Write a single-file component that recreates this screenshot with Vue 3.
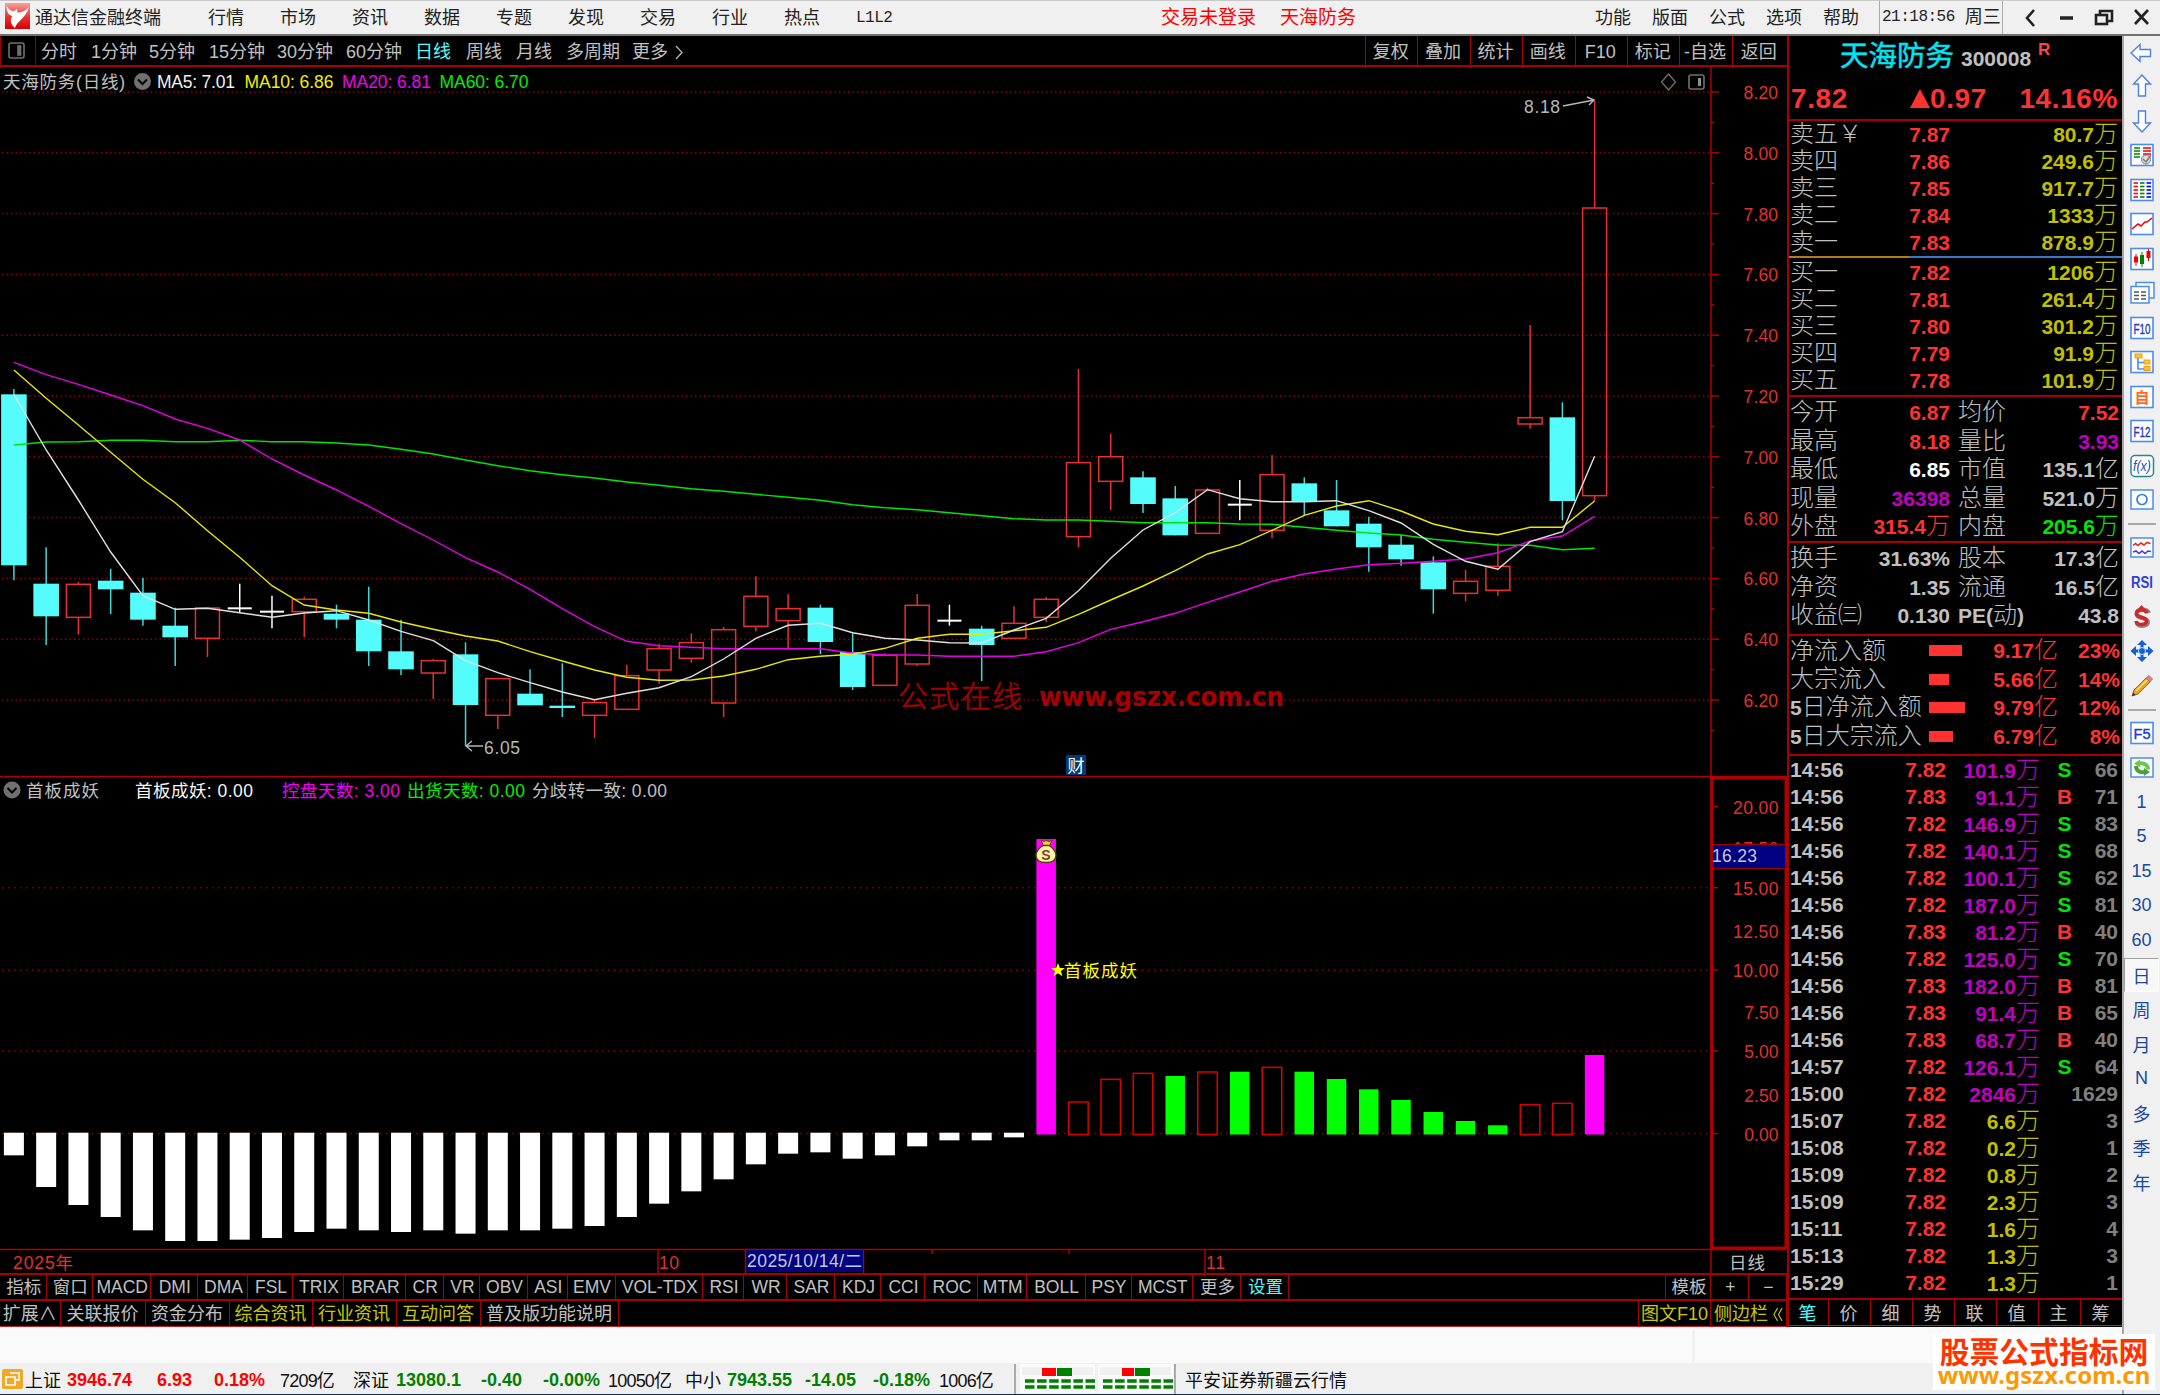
<script setup>
const menus = ['行情', '市场', '资讯', '数据', '专题', '发现', '交易', '行业', '热点', 'L1L2'];
const rightMenus = ['功能', '版面', '公式', '选项', '帮助'];
const periods = ['分时', '1分钟', '5分钟', '15分钟', '30分钟', '60分钟', '日线', '周线', '月线', '多周期', '更多'];
const actions = ['复权', '叠加', '统计', '画线', 'F10', '标记', '-自选', '返回'];
const indicators = [
  '指标', '窗口', 'MACD', 'DMI', 'DMA', 'FSL', 'TRIX', 'BRAR', 'CR', 'VR', 'OBV', 'ASI', 'EMV', 'VOL-TDX',
  'RSI', 'WR', 'SAR', 'KDJ', 'CCI', 'ROC', 'MTM', 'BOLL', 'PSY', 'MCST', '更多', '设置',
];
const links = [
  { text: '扩展∧' },
  { text: '关联报价' },
  { text: '资金分布' },
  { text: '综合资讯', hot: true },
  { text: '行业资讯', hot: true },
  { text: '互动问答', hot: true },
  { text: '普及版功能说明' },
];

// x position of the bar with index i
const cx = (i) => 13.9 + i * 32.26;
const py = (v) => 340 + v / 3;

// [type, high, top, bottom, low]   c = down, r = up, w = flat
const candles = [
  ['c', 147, 163, 676, 721], ['c', 622, 731, 829, 915], ['r', 726, 733, 832, 884], ['c', 686, 722, 748, 822],
  ['c', 713, 758, 839, 857], ['c', 803, 857, 892, 978], ['r', 804, 804, 895, 951], ['w', 731, 805, 805, 818],
  ['w', 767, 815, 815, 865], ['r', 770, 778, 815, 892], ['c', 794, 821, 839, 865], ['c', 740, 839, 934, 978],
  ['c', 839, 934, 988, 1005], ['r', 957, 962, 999, 1077], ['c', 907, 943, 1095, 1217], ['r', 1016, 1016, 1126, 1167],
  ['c', 988, 1061, 1096, 1096], ['c', 970, 1097, 1104, 1131], ['r', 1080, 1088, 1126, 1194], ['r', 974, 1007, 1108, 1108],
  ['r', 911, 926, 990, 1031], ['r', 880, 908, 955, 968], ['r', 861, 869, 1089, 1131], ['r', 709, 769, 859, 874],
  ['r', 762, 806, 842, 925], ['c', 794, 803, 906, 942], ['c', 878, 936, 1041, 1050], ['r', 940, 946, 1036, 1036],
  ['r', 762, 796, 972, 978], ['w', 794, 842, 842, 857], ['c', 857, 866, 915, 1023], ['r', 799, 850, 895, 895],
  ['r', 771, 778, 832, 847], ['r', 87, 368, 590, 622], ['r', 281, 350, 424, 510], ['c', 394, 412, 492, 519],
  ['c', 438, 475, 586, 586], ['r', 443, 450, 580, 580], ['w', 420, 494, 494, 541], ['r', 345, 404, 571, 595],
  ['c', 412, 430, 485, 526], ['c', 420, 511, 559, 559], ['c', 530, 551, 622, 695], ['c', 585, 614, 658, 677],
  ['c', 649, 667, 748, 821], ['r', 690, 724, 760, 784], ['r', 610, 679, 751, 767], ['r', -45, 233, 252, 266],
  ['c', 187, 232, 483, 541], ['r', -718, -396, 467, 483],
].map(([type, high, top, bottom, low], i) => ({
  type, x: cx(i), high: py(high), top: py(top), bottom: py(bottom), low: py(low),
}));

const averages = [
  { color: '#00e600', data: [315, 306, 305, 301, 301, 305, 305, 301, 305, 305, 309, 315, 328, 342, 360, 377, 392, 404, 414, 426, 436, 446, 454, 463, 472, 481, 494, 503, 509, 518, 527, 536, 540, 540, 544, 548, 548, 548, 552, 553, 562, 571, 579, 585, 598, 607, 615, 616, 629, 625] },
  { color: '#e600e6', data: [67, 104, 133, 165, 197, 237, 265, 300, 357, 405, 450, 499, 551, 600, 653, 696, 748, 806, 860, 904, 917, 922, 926, 926, 926, 926, 939, 945, 945, 949, 949, 949, 935, 908, 868, 845, 820, 787, 756, 724, 702, 687, 674, 670, 664, 657, 638, 603, 588, 529] },
  { color: '#e8e800', data: [90, 175, 255, 337, 418, 488, 572, 652, 737, 795, 810, 820, 846, 868, 888, 903, 935, 963, 990, 1012, 1021, 1020, 1008, 988, 959, 949, 943, 925, 895, 883, 883, 872, 862, 823, 780, 738, 692, 642, 614, 571, 526, 498, 482, 513, 552, 574, 584, 562, 562, 483] },
  { color: '#e0e0e0', data: [163, 330, 480, 636, 767, 808, 805, 818, 832, 819, 812, 840, 874, 902, 962, 998, 1028, 1056, 1079, 1060, 1043, 1010, 957, 895, 856, 850, 878, 895, 900, 908, 909, 870, 835, 752, 655, 570, 518, 449, 476, 485, 485, 482, 512, 549, 613, 664, 688, 605, 575, 349] },
].map((m) => ({ color: m.color, points: m.data.map((v, i) => `${cx(i).toFixed(1)},${py(v).toFixed(1)}`).join(' ') }));

const negative = [166, 261, 315, 351, 391, 423, 423, 419, 414, 396, 386, 391, 396, 391, 401, 391, 391, 386, 378, 351, 311, 274, 238, 193, 161, 157, 176, 166, 139, 121, 121, 112];
const positive = [
  ['m', 177], ['r', 966], ['r', 898], ['r', 880], ['g', 888], ['r', 876], ['g', 875], ['r', 862], ['g', 875],
  ['g', 897], ['g', 928], ['g', 960], ['g', 996], ['g', 1023], ['g', 1036], ['r', 974], ['r', 970], ['m', 825],
];
const bars = [
  ...negative.map((v, i) => ({ type: 'n', x: cx(i) - 10, y: 1132.7, h: 1100 + v / 3 - 1132.7 })),
  ...positive.map(([type, v], i) => ({ type, x: cx(i + 32) - 9.8, y: 780 + v / 3, h: 354.5 - v / 3 })),
];

const prices = Array.from({ length: 11 }, (_, i) => ({ text: (8.2 - i * 0.2).toFixed(2), y: 92 + i * 60.8 }));
const levels = [
  { text: '20.00', y: 806.5 },
  { text: '17.50', y: 847.5 },
  { text: '15.00', y: 887.7, grid: true },
  { text: '12.50', y: 931 },
  { text: '10.00', y: 970, grid: true },
  { text: '7.50', y: 1012 },
  { text: '5.00', y: 1051, grid: true },
  { text: '2.50', y: 1094.5 },
  { text: '0.00', y: 1133.5, grid: true },
];

const asks = [['卖五', '7.87', '80.7万'], ['卖四', '7.86', '249.6万'], ['卖三', '7.85', '917.7万'], ['卖二', '7.84', '1333万'], ['卖一', '7.83', '878.9万']];
const bids = [['买一', '7.82', '1206万'], ['买二', '7.81', '261.4万'], ['买三', '7.80', '301.2万'], ['买四', '7.79', '91.9万'], ['买五', '7.78', '101.9万']];
const details = [
  ['今开', '6.87', 'red', '均价', '7.52', 'red'],
  ['最高', '8.18', 'red', '量比', '3.93', 'purple'],
  ['最低', '6.85', 'white', '市值', '135.1亿', 'gray'],
  ['现量', '36398', 'purple', '总量', '521.0万', 'gray'],
  ['外盘', '315.4万', 'red', '内盘', '205.6万', 'green'],
];
const basics = [
  ['换手', '31.63%', 'gray', '股本', '17.3亿', 'gray'],
  ['净资', '1.35', 'gray', '流通', '16.5亿', 'gray'],
  ['收益㈢', '0.130', 'gray', 'PE(动)', '43.8', 'gray'],
];
const flows = [['净流入额', 33, '9.17亿', '23%'], ['大宗流入', 20, '5.66亿', '14%'], ['5日净流入额', 36, '9.79亿', '12%'], ['5日大宗流入', 24, '6.79亿', '8%']];
const ticks = [
  ['14:56', '7.82', '101.9万', 'S', 66], ['14:56', '7.83', '91.1万', 'B', 71], ['14:56', '7.82', '146.9万', 'S', 83],
  ['14:56', '7.82', '140.1万', 'S', 68], ['14:56', '7.82', '100.1万', 'S', 62], ['14:56', '7.82', '187.0万', 'S', 81],
  ['14:56', '7.83', '81.2万', 'B', 40], ['14:56', '7.82', '125.0万', 'S', 70], ['14:56', '7.83', '182.0万', 'B', 81],
  ['14:56', '7.83', '91.4万', 'B', 65], ['14:56', '7.83', '68.7万', 'B', 40], ['14:57', '7.82', '126.1万', 'S', 64],
  ['15:00', '7.82', '2846万', '', 1629], ['15:07', '7.82', '6.6万', '', 3], ['15:08', '7.82', '0.2万', '', 1],
  ['15:09', '7.82', '0.8万', '', 2], ['15:09', '7.82', '2.3万', '', 3], ['15:11', '7.82', '1.6万', '', 4],
  ['15:13', '7.82', '1.3万', '', 3], ['15:29', '7.82', '1.3万', '', 1],
];
const quoteTabs = ['笔', '价', '细', '势', '联', '值', '主', '筹'];

// splits "80.7万" into runs, so the digits can be bold and the unit light
const parts = (s) => String(s).match(/[\x20-\x7e]+|[^\x20-\x7e]+/g).map((t) => ({ t, num: /^[\x20-\x7e]/.test(t) }));

const frame = '<rect x="1" y="1.5" width="22" height="21" fill="#fff" stroke="#4a8cf0" stroke-width="1.6"/>';
const label = (t) =>
  `${frame}<text x="12" y="17.5" text-anchor="middle" font-family="Liberation Sans" font-size="15" fill="#2038d0" stroke="#2038d0" stroke-width=".4" textLength="17" lengthAdjust="spacingAndGlyphs">${t}</text>`;
const hlines = (x, w, c) => [5, 8.5, 12, 15.5, 19].map((y) => `<path d="M${x} ${y}h${w}" stroke="${c}" stroke-width="1.6"/>`).join('');
const arrow = 'fill="#fff" stroke="#4a80e8" stroke-width="1.4"';
const tools = [
  { icon: `<path d="M1 12L10 3.5V8.500H20.500V15.500H10V20.500Z" ${arrow}/>` },
  { icon: `<path d="M12 1L20.500 10H15.500V22H8.500V10H3.500Z" ${arrow}/>` },
  { icon: `<path d="M12 23L3.500 14H8.500V2H15.500V14H20.500Z" ${arrow}/>` },
  { icon: `${frame}${[5, 8, 11, 14].map((y) => `<path d="M4 ${y}h6" stroke="#008000" stroke-width="1.5"/>`).join('')}<path d="M13 5h8M13 8h8M13 11h8" stroke="#f00000" stroke-width="1.5"/><circle cx="16" cy="16.500" r="4.500" fill="#ddd" stroke="#777"/><path d="M13 16l3 3 5-7" fill="none" stroke="#777" stroke-width="1.4"/>` },
  { icon: `${frame}${hlines(3.5, 4.5, '#f00')}${hlines(10, 4.5, '#008000')}${hlines(16.5, 4.5, '#00f')}` },
  { icon: `${frame}<path d="M2 17L8 12L11 14L15 10L17 10L22 6" fill="none" stroke="#f00000" stroke-width="1.6"/>` },
  { icon: `${frame}<path d="M6 7v12M18.500 2v12" stroke="#f00000"/><path d="M12 5v15" stroke="#008000"/><rect x="4" y="9.500" width="4" height="6" fill="#f00000"/><rect x="10" y="8" width="4" height="9" fill="#008000"/><rect x="16.500" y="4" width="4" height="7" fill="#f00000"/>` },
  { icon: `<path d="M6 5V1.500H24V17H19" fill="#fff" stroke="#4a8cf0" stroke-width="1.500"/><rect x="1" y="5.500" width="18" height="16.500" fill="#fff" stroke="#4a8cf0" stroke-width="1.500"/><path d="M4 11h5M11 11h5M4 14.500h5M11 14.500h5M4 18h5M11 18h5" stroke="#555" stroke-width="1.300"/>` },
  { icon: label('F10') },
  { icon: `${frame}<path d="M8 7V19H14M8 12.500H14" fill="none" stroke="#4a8cf0" stroke-width="1.600"/><rect x="5" y="4" width="7" height="4" fill="#ffc040" stroke="#f0a000"/><rect x="14" y="10" width="6" height="4" fill="#ffc040" stroke="#f0a000"/><rect x="14" y="16.500" width="6" height="4" fill="#ffc040" stroke="#f0a000"/>` },
  { icon: `${frame}<text x="12" y="17.500" text-anchor="middle" font-family="Noto Sans CJK SC" font-weight="700" font-size="15" fill="#ff6a20">自</text>` },
  { icon: label('F12') },
  { icon: `<rect x="1" y="1.500" width="22.500" height="21" rx="4" fill="#fff" stroke="#208890" stroke-width="1.500"/><text x="12" y="17" text-anchor="middle" font-family="Liberation Sans" font-style="italic" font-size="15" fill="#2050d0" textLength="18" lengthAdjust="spacingAndGlyphs">f(x)</text>` },
  { icon: `<rect x="1" y="2" width="22" height="19" fill="#fff" stroke="#4a8cf0" stroke-width="1.500"/><circle cx="12" cy="11.500" r="5" fill="none" stroke="#3080e0" stroke-width="1.700"/>` },
  { line: true },
  { icon: `<rect x="1" y="2" width="22" height="19" fill="#fff" stroke="#4a8cf0" stroke-width="1.500"/><path d="M3 9.500l2.500-2 2.500 2 3-2.500 3 2 3-2.500 3.500 1" fill="none" stroke="#f02020" stroke-width="1.600"/><path d="M3 16l3-1 3 2.500 3-2.500 3 2.500 3-2.500 3 .5" fill="none" stroke="#5030e0" stroke-width="1.600"/>` },
  { icon: '<text x="12" y="17.500" text-anchor="middle" font-family="Liberation Sans" font-weight="700" font-size="16" fill="#3040d8" textLength="22" lengthAdjust="spacingAndGlyphs">RSI</text>' },
  { icon: '<path d="M19 8C18 5 15 4.500 12.500 4.500C8.500 4.500 6.500 6.500 6.500 9C6.500 15 18 11.500 18 17C18 19.500 15.500 21 12.500 21C9 21 7 19.500 6.500 17" fill="none" stroke="#888" stroke-width="4"/><path d="M17 8C16 5.500 13.500 5 11.500 5C8 5 6.500 6.500 6.500 8.500C6.500 13.500 16.500 11 16.500 16C16.500 18.500 14 19.500 11.500 19.500C8.500 19.500 6.500 18.500 6 16" fill="none" stroke="#d02828" stroke-width="3.600"/><path d="M11.500 0l4.500 5H7z" fill="#d02828"/>' },
  { icon: '<path d="M12 1l5 5h-3.500v4.500H18V7l5.500 5L18 17v-3.500h-4.500V18H17l-5 5-5-5h3.500v-4.500H6V17L.5 12 6 7v3.500h4.500V6H7z" fill="#1060d0"/><circle cx="12" cy="12" r="3.500" fill="#1060d0" stroke="#c0dcff"/>' },
  { icon: '<path d="M2 22l2-6L16 4l4 4L8 20z" fill="#f0a020" stroke="#805010" stroke-width=".8"/><path d="M16 4l3-2.500 3.500 3.500L20 8z" fill="#e88080" stroke="#907070" stroke-width=".8"/><path d="M2 22l1.200-3.500L5.500 21z" fill="#333"/><path d="M6 17L17 6" stroke="#ffe080" stroke-width="1.500"/>' },
  { line: true },
  { icon: label('F5') },
  { icon: `<rect x="1" y="2" width="22" height="19" fill="#fff" stroke="#4a8cf0" stroke-width="1.500"/><path d="M18 13.500C18 9 14 6.500 9 7.500" fill="none" stroke="#6cc850" stroke-width="4"/><path d="M10 3.500V11.500L4 7.500z" fill="#6cc850"/><path d="M6 10C6 14.500 10 17 15 16" fill="none" stroke="#48a038" stroke-width="4"/><path d="M14 12V20L20 16z" fill="#48a038"/>` },
  ...['1', '5', '15', '30', '60', '日', '周', '月', 'N', '多', '季', '年'].map((text) => ({ text })),
];

const indexes = [
  ['上证', '3946.74', '6.93', '0.18%', '7209亿', 'up'],
  ['深证', '13080.1', '-0.40', '-0.00%', '10050亿', 'down'],
  ['中小', '7943.55', '-14.05', '-0.18%', '1006亿', 'down'],
];
</script>

<template>
  <div class="app">
    <header class="titlebar">
      <svg class="logo" width="25" height="26" viewBox="0 0 25 26">
        <defs>
          <linearGradient id="logoFill" x1="0" y1="0" x2="0" y2="1">
            <stop offset="0" stop-color="#f8a0a0" />
            <stop offset=".55" stop-color="#e83030" />
            <stop offset="1" stop-color="#d80000" />
          </linearGradient>
        </defs>
        <rect width="25" height="26" fill="url(#logoFill)" />
        <path d="M1.500 2C1.500 8 3 12 7.500 13C5 16 5 21 10 25C12 18 21 15 24 4C20 8 16 10 12 9.500C13 6 11 5 10 8C7 8.500 3 7 1.500 2Z" fill="#fff" />
      </svg>
      <span class="brand">通达信金融终端</span>
      <nav class="menu">
        <span v-for="m in menus" :key="m" :class="{ mono: m === 'L1L2' }">{{ m }}</span>
      </nav>
      <div class="login"><span>交易未登录</span><span>天海防务</span></div>
      <nav class="menu-right">
        <span v-for="m in rightMenus" :key="m">{{ m }}</span>
      </nav>
      <div class="clock"><span class="mono">21:18:56</span><span>周三</span></div>
      <svg class="winbtns" width="157" height="34" viewBox="2003 0 157 34" fill="none" stroke="#222" stroke-width="2.6">
        <path d="M2034 9L2027 17L2034 25" />
        <path d="M2060 17H2073" stroke-width="3.500" />
        <path d="M2100 13V10H2112V20H2108" />
        <rect x="2096" y="14" width="11" height="9" />
        <path d="M2135 9L2148 23M2148 9L2135 23" />
      </svg>
    </header>

    <div class="body">
      <div class="workspace">
        <div class="terminal">
          <section class="chart-area">
            <div class="toolbar">
              <div class="panel-toggle">
                <svg width="18" height="18" viewBox="0 0 18 18" fill="none" stroke="#707070" stroke-width="1.6">
                  <rect x="1" y="1" width="15" height="15" rx="2" />
                  <rect x="10" y="4" width="2.500" height="9" fill="#707070" />
                </svg>
              </div>
              <nav class="periods">
                <span v-for="p in periods" :key="p" :class="{ active: p === '日线' }">{{ p }}</span>
                <svg width="8" height="15" viewBox="0 0 8 15" fill="none" stroke="#b8b8b8" stroke-width="1.3">
                  <path d="M1 1L7 7.500L1 14" />
                </svg>
              </nav>
              <nav class="actions">
                <span v-for="a in actions" :key="a">{{ a }}</span>
              </nav>
            </div>

            <svg class="chart" width="1787" height="1206" viewBox="0 67 1787 1206">
              <g class="grid">
                <line v-for="p in prices" :key="p.text" x1="2" x2="1710" :y1="p.y" :y2="p.y" class="dots" />
                <line v-for="l in levels.filter((v) => v.grid)" :key="l.text" x1="2" x2="1710" :y1="l.y" :y2="l.y" class="dots wide" />
              </g>

              <g v-for="(c, i) in candles" :key="i" :class="['candle', c.type]">
                <line :x1="c.x" :x2="c.x" :y1="c.high" :y2="c.type === 'r' ? c.top : c.low" />
                <line v-if="c.type === 'r'" :x1="c.x" :x2="c.x" :y1="c.bottom" :y2="c.low" />
                <line v-if="c.type === 'w'" :x1="c.x - 12" :x2="c.x + 12" :y1="c.top" :y2="c.top" class="flat" />
                <rect v-else :x="c.type === 'c' ? c.x - 12.800 : c.x - 12" :y="c.top" :width="c.type === 'c' ? 25.600 : 24" :height="c.bottom - c.top" />
              </g>
              <polyline v-for="m in averages" :key="m.color" :points="m.points" :stroke="m.color" fill="none" stroke-width="1.400" />

              <g class="frame">
                <path d="M1711 67V1273M0 776.500H1787M0 1249.500H1787M658 1249V1273M1205 1249V1273M932 1249V1254M1069 1249V1254M863.500 1249V1273M745.500 1249V1273" />
                <path d="M1712 778H1786V1248H1712Z" class="thick" />
                <path v-for="p in prices" :key="p.text" :d="`M1711 ${p.y}h8`" />
                <path v-for="p in prices" :key="p.y" :d="`M1711 ${p.y + 30.400}h3`" />
                <path v-for="l in levels" :key="l.text" :d="`M1711 ${l.y}h${l.text.endsWith('50') ? 3 : 7}`" />
              </g>

              <g class="axis">
                <text v-for="p in prices" :key="p.text" x="1743.500" :y="p.y + 7" textLength="34.500">{{ p.text }}</text>
                <text v-for="l in levels" :key="l.text" x="1778.500" :y="l.y + 7" text-anchor="end" :textLength="l.text.length * 11.300 - 11">{{ l.text }}</text>
                <rect x="1713" y="844.500" width="72.500" height="24" fill="#000080" stroke="#a00000" />
                <text x="1712" y="861.500" textLength="45" class="cursor">16.23</text>
              </g>

              <!-- main chart legend -->
              <g class="legend">
                <text x="3" y="88" textLength="122" fill="#c0c0c0">天海防务(日线)</text>
                <text x="157" y="87.500" textLength="78" fill="#f0f0f0">MA5: 7.01</text>
                <text x="244.500" y="87.500" textLength="89" fill="#f0f000">MA10: 6.86</text>
                <text x="342" y="87.500" textLength="89" fill="#f000f0">MA20: 6.81</text>
                <text x="439.500" y="87.500" textLength="89" fill="#00f000">MA60: 6.70</text>
                <circle cx="142.500" cy="81.500" r="8.500" fill="#707070" />
                <path d="M138 79.500l4.500 4.500l4.500-4.500" stroke="#000" stroke-width="2" fill="none" />
                <path d="M1668.500 74l7 8l-7 8l-7-8z" fill="none" stroke="#707070" stroke-width="1.300" />
                <rect x="1689" y="75" width="15" height="14" rx="2" fill="none" stroke="#707070" stroke-width="1.600" />
                <rect x="1698" y="78" width="3" height="8" fill="#909090" />
              </g>

              <g class="marks">
                <text x="1524" y="112.500" textLength="36">8.18</text>
                <path d="M1563 106L1594 100M1587 97L1594 100L1589 105" />
                <text x="484" y="753.500" textLength="36">6.05</text>
                <path d="M467 746H483M472 741L466 746L472 751" />
              </g>

              <text x="898" y="706.500" textLength="124" class="stamp-cn">公式在线</text>
              <text x="1039" y="706" textLength="245" lengthAdjust="spacingAndGlyphs" class="stamp-url">www.gszx.com.cn</text>
              <rect x="1066" y="755" width="20" height="20" fill="#003c74" />
              <text x="1067.500" y="771.500" class="news">财</text>

              <g class="legend">
                <circle cx="12" cy="790" r="8.500" fill="#707070" />
                <path d="M7.500 788l4.500 4.500l4.500-4.500" stroke="#000" stroke-width="2" fill="none" />
                <text x="26" y="796.500" textLength="73" fill="#c0c0c0">首板成妖</text>
                <text x="135" y="796.500" textLength="118" fill="#f8f8f8">首板成妖: 0.00</text>
                <text x="282" y="796.500" textLength="118" fill="#f000f0">控盘天数: 3.00</text>
                <text x="407" y="796.500" textLength="118" fill="#00f000">出货天数: 0.00</text>
                <text x="532" y="796.500" textLength="135" fill="#c0c0c0">分歧转一致: 0.00</text>
              </g>

              <rect v-for="(b, i) in bars" :key="i" :x="b.x" :y="b.y" :width="b.type === 'n' ? 20 : 19.500" :height="b.h" :class="['bar', b.type]" />

              <g class="bag">
                <path d="M1041 840l3 1.500 2-1 3 1 3-1.500-3 7h-5z" fill="#f0d030" stroke="#604000" />
                <path d="M1043 845.500h6C1053 848 1056 851.500 1056 855.500C1056 860 1052.500 862.500 1046 862.500C1039.500 862.500 1036 860 1036 855.500C1036 851.500 1039 848 1043 845.500Z" fill="#fcf4a0" stroke="#504010" stroke-width="1.400" />
                <text x="1046" y="859.500" text-anchor="middle">S</text>
              </g>
              <path d="M1058 963l1.900 5h5l-4 3.200 1.500 5-4.400-3-4.400 3 1.500-5-4-3.200h5z" fill="#ff0" />
              <text x="1064" y="977" textLength="73" class="signal">首板成妖</text>

              <g class="dates">
                <rect x="746.500" y="1250" width="116.500" height="22" fill="#000080" />
                <text x="13" y="1268.500" textLength="60">2025年</text>
                <text x="659" y="1268.500" textLength="20">10</text>
                <text x="1206" y="1268.500" textLength="19">11</text>
                <text x="747" y="1267" textLength="115" class="cursor">2025/10/14/二</text>
                <text x="1729" y="1268.500" textLength="36" class="unit">日线</text>
              </g>
            </svg>

            <div class="tabs indicators">
              <span v-for="t in indicators" :key="t" :class="{ active: t === '设置' }">{{ t }}</span>
              <div class="filler"></div>
              <span>模板</span>
              <span>+</span>
              <span>−</span>
            </div>
            <div class="tabs links">
              <span v-for="l in links" :key="l.text" :class="{ hot: l.hot }">{{ l.text }}</span>
              <div class="filler"></div>
              <span class="hot">图文F10</span>
              <span class="hot">侧边栏
                <svg width="10" height="15" viewBox="0 0 11 16" fill="none" stroke="#c8c800" stroke-width="1.200"><path d="M5 1L1 8L5 15M10 1L6 8L10 15" /></svg>
              </span>
            </div>
          </section>

          <section class="quote">
            <div class="quote-head">
              <div class="name"><span class="cn">天海防务</span><b>300008</b><sup>R</sup></div>
              <div class="last">
                <b>7.82</b>
                <b class="change"><svg width="20" height="19" viewBox="0 0 20 19"><path d="M10 0L20 19H0Z" fill="#ff3232" /></svg>0.97</b>
                <b>14.16%</b>
              </div>
            </div>

            <div class="block book asks">
              <div v-for="(r, i) in asks" :key="r[0]" class="book-row">
                <span>{{ r[0] }}<span v-if="i === 0" class="yen">￥</span></span>
                <span class="red"><b>{{ r[1] }}</b></span>
                <span class="yellow"><component :is="p.num ? 'b' : 'span'" v-for="p in parts(r[2])" :key="p.t">{{ p.t }}</component></span>
              </div>
            </div>
            <div class="block book bids">
              <div v-for="r in bids" :key="r[0]" class="book-row">
                <span>{{ r[0] }}</span>
                <span class="red"><b>{{ r[1] }}</b></span>
                <span class="yellow"><component :is="p.num ? 'b' : 'span'" v-for="p in parts(r[2])" :key="p.t">{{ p.t }}</component></span>
              </div>
            </div>
            <div v-for="(group, g) in [details, basics]" :key="g" class="block stats">
              <div v-for="r in group" :key="r[0]" class="stat-row">
                <span>{{ r[0] }}</span>
                <span :class="['val', r[2]]"><component :is="p.num ? 'b' : 'span'" v-for="p in parts(r[1])" :key="p.t">{{ p.t }}</component></span>
                <span class="second"><component :is="p.num ? 'b' : 'span'" v-for="(p, k) in parts(r[3])" :key="k">{{ p.t }}</component></span>
                <span :class="['val', r[5]]"><component :is="p.num ? 'b' : 'span'" v-for="p in parts(r[4])" :key="p.t">{{ p.t }}</component></span>
              </div>
            </div>
            <div class="block flows">
              <div v-for="r in flows" :key="r[0]" class="flow-row">
                <span><component :is="p.num ? 'b' : 'span'" v-for="p in parts(r[0])" :key="p.t">{{ p.t }}</component></span>
                <i class="flow-bar" :style="{ width: r[1] + 'px' }"></i>
                <span class="val red"><component :is="p.num ? 'b' : 'span'" v-for="p in parts(r[2])" :key="p.t">{{ p.t }}</component></span>
                <span class="val red"><b>{{ r[3] }}</b></span>
              </div>
            </div>
            <div class="block ticks">
              <div v-for="(t, i) in ticks" :key="i" class="tick-row">
                <b>{{ t[0] }}</b>
                <b class="val red">{{ t[1] }}</b>
                <span :class="['val', i < 13 ? 'purple' : 'yellow']"><component :is="p.num ? 'b' : 'span'" v-for="p in parts(t[2])" :key="p.t">{{ p.t }}</component></span>
                <b :class="['side', t[3] === 'S' ? 'green' : 'red']">{{ t[3] }}</b>
                <b class="val count">{{ t[4] }}</b>
              </div>
            </div>
            <div class="quote-tabs">
              <span v-for="t in quoteTabs" :key="t" :class="{ active: t === '笔' }">{{ t }}</span>
            </div>
          </section>
        </div>

        <div class="blank"><i></i></div>
        <footer class="status">
          <svg width="21" height="20" viewBox="0 0 21 20">
            <rect width="21" height="20" rx="2" fill="#f0a828" />
            <path d="M8 4h9v7h-3M4 8h9v8H4z" fill="none" stroke="#fff" stroke-width="1.600" />
          </svg>
          <template v-for="x in indexes" :key="x[0]">
            <span>{{ x[0] }}</span>
            <b :class="x[5]">{{ x[1] }}</b>
            <b :class="x[5]">{{ x[2] }}</b>
            <b :class="x[5]">{{ x[3] }}</b>
            <span class="amount">{{ x[4] }}</span>
          </template>
          <div class="meters">
            <svg width="154" height="29" viewBox="0 0 154 29">
              <g v-for="n in 2" :key="n" :transform="`translate(${(n - 1) * 78} 0)`">
                <rect x="0" y="0" width="75" height="29" fill="#fbfbfb" />
                <rect x="2" y="3" width="71" height="8" fill="#f0f0f0" />
                <rect :x="n === 1 ? 22 : 24" y="4" :width="n === 1 ? 14 : 12" height="8" fill="#f00" />
                <rect x="37" y="4" width="15" height="8" fill="#008000" />
                <path d="M5 17H75M5 23H75" stroke="#008000" stroke-width="3.500" stroke-dasharray="9.500 2.600" />
              </g>
            </svg>
          </div>
          <span class="server">平安证券新疆云行情</span>
        </footer>
      </div>

      <aside class="tools">
        <template v-for="(t, i) in tools" :key="i">
          <hr v-if="t.line" />
          <div v-else :class="['tool', { pressed: t.text === '日' }]">
            <svg v-if="t.icon" width="24" height="24" viewBox="0 0 24 24" v-html="t.icon"></svg>
            <span v-else>{{ t.text }}</span>
          </div>
        </template>
      </aside>
    </div>

    <div class="site-badge">
      <strong>股票公式指标网</strong>
      <span>www.gszx.com.cn</span>
    </div>
  </div>
</template>

<style>
body {
  margin: 0;
  background: #f0f0f0;
}
</style>

<style scoped>
.app {
  position: relative;
  width: 2160px;
  height: 1395px;
  display: flex;
  flex-direction: column;
  overflow: hidden;
  box-sizing: border-box;
  border-bottom: 1px solid #1c2c40;
  background: #f0f0f0;
  font-family: 'Liberation Sans', 'Noto Sans CJK SC', sans-serif;
  font-size: 18px;
  font-weight: 400;
  white-space: nowrap;
}

.app * {
  box-sizing: border-box;
}

.mono {
  font-family: 'Liberation Mono', monospace;
  font-size: 16px;
  letter-spacing: -0.5px;
}

.titlebar {
  flex: none;
  height: 36px;
  display: flex;
  align-items: center;
  padding-left: 5px;
  border-top: 1px solid #c8c8c8;
  border-bottom: 2px solid #707070;
  color: #222;
  line-height: 32px;
}

.logo {
  margin: 0 5px 3px 0;
}

.brand {
  width: 173px;
}

.menu {
  display: grid;
  grid-template-columns: repeat(10, 72px);
  width: 953px;
}

.login {
  display: flex;
  gap: 24px;
  width: 434px;
  color: #f00;
  font-size: 19px;
}

.menu-right {
  display: grid;
  grid-template-columns: repeat(5, 57px);
  width: 284px;
}

.clock {
  display: flex;
  gap: 10px;
  width: 124px;
  height: 33px;
  padding-left: 2px;
  border-left: 1px solid #aaa;
  border-right: 1px solid #aaa;
}

.body {
  flex: 1;
  display: flex;
  min-height: 0;
}

.workspace {
  width: 2122px;
  display: flex;
  flex-direction: column;
}

.terminal {
  display: flex;
  height: 1291px;
  background: #000;
  color: #c0c0c0;
}

.chart-area {
  flex: none;
  width: 1787px;
  display: flex;
  flex-direction: column;
}

.toolbar {
  display: flex;
  height: 31px;
  border-bottom: 2px solid #a80000;
  border-left: 1px solid #a80000;
  line-height: 32px;
}

.panel-toggle {
  width: 35px;
  display: flex;
  align-items: center;
  padding-left: 7px;
  border-right: 1px solid #800000;
}

.periods {
  display: grid;
  grid-template-columns: 50px 58px 60px 68px 69px 69px 51px 50px 50px 66px 43px 20px;
  align-items: center;
  padding-left: 5px;
  width: 1329px;
}

.active {
  color: #54fcfc;
}

.actions {
  display: grid;
  grid-template-columns: repeat(7, 52.4px) 1fr;
  flex: 1;
}

.actions span {
  text-align: center;
  padding-right: 2px;
  border-left: 1px solid #a80000;
}

.chart {
  display: block;
  flex: none;
}

.chart text {
  font-size: 17.5px;
}

.dots {
  stroke: #900000;
  stroke-width: 1.5;
  stroke-dasharray: 1.5 3;
}

.dots.wide {
  stroke-dasharray: 1.5 4.5;
}

.candle {
  stroke-width: 1.5;
  fill: none;
}

.candle.c {
  stroke: #40d8d8;
}

.candle.c rect {
  fill: #54fcfc;
  stroke: none;
}

.candle.r {
  stroke: #e83030;
}

.candle.w {
  stroke: #fff;
}

.candle .flat {
  stroke-width: 2;
}

.frame path {
  fill: none;
  stroke: #b00000;
  stroke-width: 1.5;
}

.frame .thick {
  stroke-width: 3;
}

.axis,
.dates {
  fill: #e03030;
}

.cursor {
  fill: #c8c8d8;
}

.unit {
  fill: #c0c0c0;
}

.marks text {
  fill: #b8b8b8;
}

.marks path {
  fill: none;
  stroke: #b8b8b8;
  stroke-width: 1.4;
}

.chart .stamp-cn {
  fill: #a80000;
  stroke: #a80000;
  stroke-width: 0.5;
  font-size: 30px;
  font-weight: 300;
}

.chart .stamp-url {
  fill: #a80000;
  font-family: 'DejaVu Sans', sans-serif;
  font-size: 26px;
  font-weight: 700;
}

.chart .news {
  fill: #fff;
  font-size: 17px;
}

.chart .signal {
  fill: #ff0;
}

.chart .bag text {
  fill: #804040;
  font-size: 14px;
  font-weight: 700;
}

.bar.n {
  fill: #fff;
}

.bar.m {
  fill: #f0f;
}

.bar.g {
  fill: #0f0;
}

.bar.r {
  fill: #000;
  stroke: #d80000;
  stroke-width: 1.5;
}

.tabs {
  display: grid;
  text-align: center;
  border-top: 2px solid #a80000;
  font-size: 17.5px;
}

.tabs span {
  border-right: 1px solid #a80000;
}

.tabs .filler + span {
  border-left: 1px solid #a80000;
}

.indicators {
  height: 26px;
  line-height: 25px;
  grid-template-columns: 46.5px 46.5px 57.5px 47.5px 50px 45px 51px 61.5px 38.5px 36px 48px 39.5px 48px 87.5px 41px 43px 48px 46px 44px 53px 48.5px 59px 46px 61.5px 48px 48px 1fr 46px 37.5px 38.5px;
}

.indicators span {
  padding-left: 2px;
}

.links {
  height: 28px;
  line-height: 27px;
  border-bottom: 1px solid #c02020;
  font-size: 18px;
  grid-template-columns: 60.5px 85px 84px 83px 84px 84px 138px 1fr 73px 76px;
}

.links .hot {
  color: #c8c800;
}

.links svg {
  vertical-align: -2px;
}

.quote {
  width: 335px;
  display: grid;
  grid-template-rows: 83px 137px 139px 146px 93px 120px 544px 28px;
  border-left: 2px solid #a80000;
  font-size: 24px;
  font-weight: 300;
}

.quote b {
  font-size: 21px;
  font-weight: 700;
}

.red {
  color: #ff3232;
}

.yellow {
  color: #c0c000;
}

.purple {
  color: #c000c0;
}

.green {
  color: #00e600;
}

.white {
  color: #fff;
}

.name {
  display: flex;
  align-items: baseline;
  height: 43px;
  padding-left: 51px;
  line-height: 40px;
}

.name .cn {
  width: 121px;
  color: #00e4f4;
  font-size: 28.5px;
  font-weight: 400;
  -webkit-text-stroke: 0.5px #00e4f4;
}

.name sup {
  margin-left: 7px;
  align-self: flex-start;
  color: #ff4444;
  font-size: 17px;
  font-weight: 700;
  line-height: 28px;
}

.last {
  display: grid;
  grid-template-columns: 119px 1fr auto;
  padding: 0 4px 0 2px;
  color: #ff3232;
  line-height: 40px;
}

.last b {
  font-size: 28px;
  letter-spacing: 0.6px;
}

.block {
  border-top: 2px solid #a80000;
}

.book-row {
  height: 27px;
  line-height: 27px;
  display: grid;
  grid-template-columns: 80px 80px 1fr;
  padding: 0 4px 0 1px;
}

.asks .book-row {
  line-height: 25px;
}

.book-row > :not(:first-child),
.val {
  text-align: right;
}

.yen {
  font-size: 24px;
}

.bids {
  border-top: 2px solid;
  border-image: linear-gradient(90deg, #b87820 36%, #3878c8 36%) 1;
}

.stats {
  padding-top: 1px;
}

.stat-row {
  height: 28.5px;
  line-height: 28px;
  display: grid;
  grid-template-columns: 76px 84px 76px 1fr;
  padding: 0 3px 0 1px;
}

.second {
  padding-left: 8px;
}

.flow-row {
  height: 28.5px;
  line-height: 28px;
  display: grid;
  grid-template-columns: 139px 44px 85px 1fr;
  align-items: center;
  padding: 0 2px 0 1px;
}

.flow-bar {
  height: 11px;
  background: #ff3232;
}

.tick-row {
  height: 27px;
  line-height: 27px;
  display: grid;
  grid-template-columns: 76px 80px 94px 49px 1fr;
  padding: 0 4px 0 1px;
}

.side {
  text-align: center;
}

.count {
  color: #808080;
  margin-left: -20px;
}

.quote-tabs {
  display: grid;
  grid-template-columns: 39px repeat(7, 42px);
  border-top: 2px solid #a80000;
  border-bottom: 1px solid #c02020;
  font-size: 18px;
  font-weight: 400;
  line-height: 28px;
  text-align: center;
}

.quote-tabs span {
  height: 25px;
  padding-right: 2px;
}

.quote-tabs span + span {
  border-left: 1px solid #a80000;
}

.blank {
  height: 36px;
  background: #fafafa;
  padding-left: 1692px;
}

.blank i {
  display: block;
  width: 3px;
  height: 32px;
  margin-top: 4px;
  background: #f0f0f0;
}

.status {
  flex: 1;
  display: grid;
  grid-template-columns: 23px 42px 90px 57px 66px 73px 43px 85px 62px 65px 77px 42px 78px 68px 66px 75px 162px 1fr;
  align-items: center;
  padding-left: 2px;
  color: #111;
  font-size: 18px;
}

.status b {
  padding-top: 3px;
}

.amount {
  letter-spacing: -0.8px;
}

.up {
  color: #f00;
}

.down {
  color: #008000;
}

.meters {
  height: 30px;
  padding-left: 4px;
  border-left: 2px solid #aaa;
  border-right: 2px solid #aaa;
}

.server {
  padding-left: 9px;
}

.tools {
  flex: 1;
  display: flex;
  flex-direction: column;
  padding-right: 1px;
  border-left: 2px solid #a8a8a8;
  color: #1848a0;
}

.tool {
  height: 34.5px;
  flex: none;
  display: flex;
  align-items: center;
  justify-content: center;
}

.tool:first-child {
  height: 33px;
}

.tool svg {
  overflow: visible;
}

.tool.pressed {
  border: 1px solid #a0a0a0;
  border-right-color: #fff;
  border-bottom-color: #fff;
  background: #f8f8f8;
}

.tools hr {
  width: 28px;
  height: 2px;
  margin: 5.5px auto;
  border: 0;
  background: #aaa;
}

.site-badge {
  position: absolute;
  left: 1933px;
  top: 1334px;
  width: 222px;
  height: 56px;
  background: #fff;
  text-align: center;
}

.site-badge strong {
  display: block;
  height: 31px;
  font-family: 'Noto Sans CJK SC', sans-serif;
  font-size: 29.8px;
  line-height: 33px;
  color: #ff3300;
}

.site-badge span {
  display: block;
  font-family: 'Noto Sans', sans-serif;
  font-size: 24px;
  font-weight: 700;
  line-height: 20px;
  color: #ff9900;
}
</style>
